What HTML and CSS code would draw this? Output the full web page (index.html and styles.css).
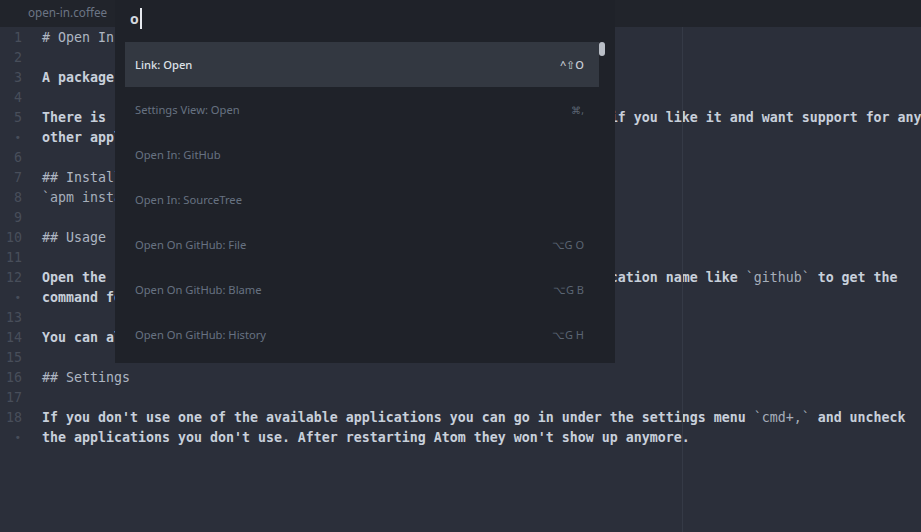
FILE: index.html
```html
<!DOCTYPE html>
<html>
<head>
<meta charset="utf-8">
<link rel="stylesheet" href="styles.css">
</head>
<body>
<div class="app">
  <div class="tabbar"><span class="tab-title">open-in.coffee</span></div>
  <div class="editor">
    <div class="gutter">
      <div class="ln">1</div>
      <div class="ln">2</div>
      <div class="ln">3</div>
      <div class="ln">4</div>
      <div class="ln">5</div>
      <div class="ln dot">•</div>
      <div class="ln">6</div>
      <div class="ln">7</div>
      <div class="ln">8</div>
      <div class="ln">9</div>
      <div class="ln">10</div>
      <div class="ln">11</div>
      <div class="ln">12</div>
      <div class="ln dot">•</div>
      <div class="ln">13</div>
      <div class="ln">14</div>
      <div class="ln">15</div>
      <div class="ln">16</div>
      <div class="ln">17</div>
      <div class="ln">18</div>
      <div class="ln dot">•</div>
    </div>
    <div class="lines">
      <div class="row"><span class="h"># Open In</span></div>
      <div class="row"></div>
      <div class="row"><span class="b">A package to open files and folders in other applications.</span></div>
      <div class="row"></div>
      <div class="row"><span class="b">There is </span><span class="c">`github`</span><span class="b">, </span><span class="c">`sourcetree`</span><span class="b">, </span><span class="c">`finder`</span><span class="b"> and </span><span class="c">`tower`</span><span class="b"> support now, but if you like it and want support for any</span></div>
      <div class="row"><span class="b">other application please open an issue.</span></div>
      <div class="row"></div>
      <div class="row"><span class="h">## Installation</span></div>
      <div class="row"><span class="c">`apm install open-in`</span></div>
      <div class="row"></div>
      <div class="row"><span class="h">## Usage</span></div>
      <div class="row"></div>
      <div class="row"><span class="b">Open the </span><span class="c">`command palette`</span><span class="b"> and type </span><span class="c">`open in`</span><span class="b"> followed by a valid application name like </span><span class="c">`github`</span><span class="b"> to get the</span></div>
      <div class="row"><span class="b">command for that application.</span></div>
      <div class="row"></div>
      <div class="row"><span class="b">You can also add keybindings for each application.</span></div>
      <div class="row"></div>
      <div class="row"><span class="h">## Settings</span></div>
      <div class="row"></div>
      <div class="row"><span class="b">If you don't use one of the available applications you can go in under the settings menu </span><span class="c">`cmd+,`</span><span class="b"> and uncheck</span></div>
      <div class="row"><span class="b">the applications you don't use. After restarting Atom they won't show up anymore.</span></div>
    </div>
  </div>
  <div class="wrap-guide"></div>
  <div class="palette">
    <div class="query"><span class="query-text">o</span><span class="cursor"></span></div>
    <div class="list">
      <div class="items">
        <div class="item selected"><span class="name">Link: Open</span><span class="keys">^⇧O</span></div>
        <div class="item"><span class="name">Settings View: Open</span><span class="keys small">⌘,</span></div>
        <div class="item"><span class="name">Open In: GitHub</span></div>
        <div class="item"><span class="name">Open In: SourceTree</span></div>
        <div class="item"><span class="name">Open On GitHub: File</span><span class="keys">⌥G O</span></div>
        <div class="item"><span class="name">Open On GitHub: Blame</span><span class="keys">⌥G B</span></div>
        <div class="item"><span class="name">Open On GitHub: History</span><span class="keys">⌥G H</span></div>
      </div>
      <div class="scrollbar"><div class="thumb"></div></div>
    </div>
  </div>
</div>
</body>
</html>
```

FILE: styles.css
```css
html, body {
  margin: 0;
  padding: 0;
  background: #2b2f3a;
}
.app {
  position: relative;
  width: 921px;
  height: 532px;
  overflow: hidden;
  display: flex;
  flex-direction: column;
}
.tabbar {
  height: 27px;
  flex: none;
  background: #21242b;
  display: flex;
  align-items: center;
  padding-left: 28px;
}
.tab-title {
  font-family: "Noto Sans", sans-serif;
  font-size: 11.7px;
  color: #6c7585;
  position: relative;
  top: -2px;
}
.editor {
  flex: 1;
  display: flex;
  padding-top: 1px;
  background: #2b2f3a;
  font-family: "DejaVu Sans Mono", monospace;
  font-size: 13.29px;
  line-height: 20px;
}
.gutter {
  width: 22px;
  padding-right: 10px;
  flex: none;
  text-align: right;
  color: #484e5a;
}
.ln { height: 20px; }
.ln.dot { padding-right: 1px; font-size: 11px; }
.lines {
  padding-left: 10px;
  flex: 1;
  overflow: hidden;
}
.row {
  height: 20px;
  white-space: pre;
}
.b { font-weight: bold; color: #c8d0db; }
.h { color: #aeb6c2; }
.c { color: #a6aeba; }
.wrap-guide {
  position: absolute;
  left: 682px;
  top: 27px;
  bottom: 0;
  width: 1px;
  background: #353a46;
}
.palette {
  position: absolute;
  left: 115px;
  top: 0;
  width: 480px;
  padding: 0 10px 6px 10px;
  background: #1f2229;
  font-family: "Noto Sans", sans-serif;
}
.query {
  height: 37px;
  margin-bottom: 5px;
  padding-left: 5px;
  display: flex;
  align-items: center;
}
.query-text {
  font-size: 14px;
  font-weight: bold;
  color: #d3d8df;
}
.cursor {
  width: 2px;
  height: 21px;
  background: #e6e9ee;
  margin-left: 1px;
}
.list {
  display: flex;
}
.items {
  width: 474px;
}
.item {
  height: 45px;
  display: flex;
  align-items: center;
  justify-content: space-between;
  padding: 0 15px 0 10px;
  font-size: 11.2px;
  color: #677282;
}
.item.selected {
  background: #333841;
  color: #dde1e7;
  font-weight: 500;
}
.keys {
  color: #5b6573;
  font-size: 11px;
}
.item.selected .keys { color: #c9ced6; }
.keys.small { font-size: 10px; }
.scrollbar {
  width: 6px;
}
.thumb {
  width: 6px;
  height: 14px;
  border-radius: 3px;
  background: #b9bec6;
}
```
